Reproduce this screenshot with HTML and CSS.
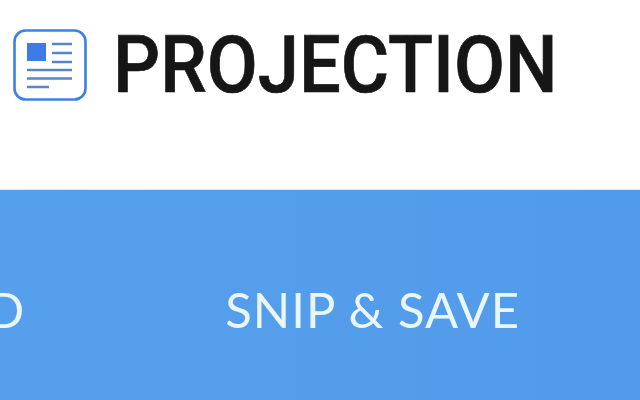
FILE: index.html
```html
<!DOCTYPE html>
<html lang="en">
<head>
    <meta charset="UTF-8">
    <title>Projection</title>
    <link rel="stylesheet" href="styles.css">
</head>
<body>
    <header class="header">
        <svg class="logo" viewBox="0 0 74 72" width="74" height="72">
            <rect x="1.5" y="1.5" width="71" height="69" rx="11" fill="#fff" stroke="#3f80e0" stroke-width="2.6"/>
            <rect x="14" y="14" width="19" height="18" fill="#3f7ae6"/>
            <path d="M39 15h20M39 24h20M39 33h20M14 41h45M14 49.5h45M14 58h22" stroke="#5a86c8" stroke-width="2.4" fill="none"/>
        </svg>
        <h1 class="brand">PROJECTION</h1>
    </header>
    <nav class="nav">
        <a class="nav-item">DOWNLOAD</a>
        <a class="nav-item">SNIP &amp; SAVE</a>
    </nav>
</body>
</html>
```

FILE: styles.css
```css
* {
    margin: 0;
    padding: 0;
    box-sizing: border-box;
}

body {
    width: 640px;
    height: 400px;
    overflow: hidden;
    background: #fff;
    filter: blur(0.5px);
}

.header {
    height: 189px;
    display: flex;
    align-items: flex-start;
    gap: 26px;
    padding: 29px 0 0 13px;
}

.brand {
    font-family: Roboto, sans-serif;
    font-size: 80px;
    font-weight: 500;
    -webkit-text-stroke: 0.7px #161616;
    line-height: 72px;
    color: #161616;
    transform: scaleX(0.925);
    transform-origin: left center;
}

.nav {
    height: 211px;
    display: flex;
    justify-content: flex-end;
    gap: 200px;
    padding: 90px 120px 0 0;
    overflow: hidden;
    border-top: 1px solid #d9e6f5;
    background: linear-gradient(90deg, #569fec, #529bea);
}

.nav-item {
    flex-shrink: 0;
    font-family: Lato, sans-serif;
    font-size: 49px;
    letter-spacing: 1px;
    line-height: 58px;
    color: #eaf6fd;
}
```
